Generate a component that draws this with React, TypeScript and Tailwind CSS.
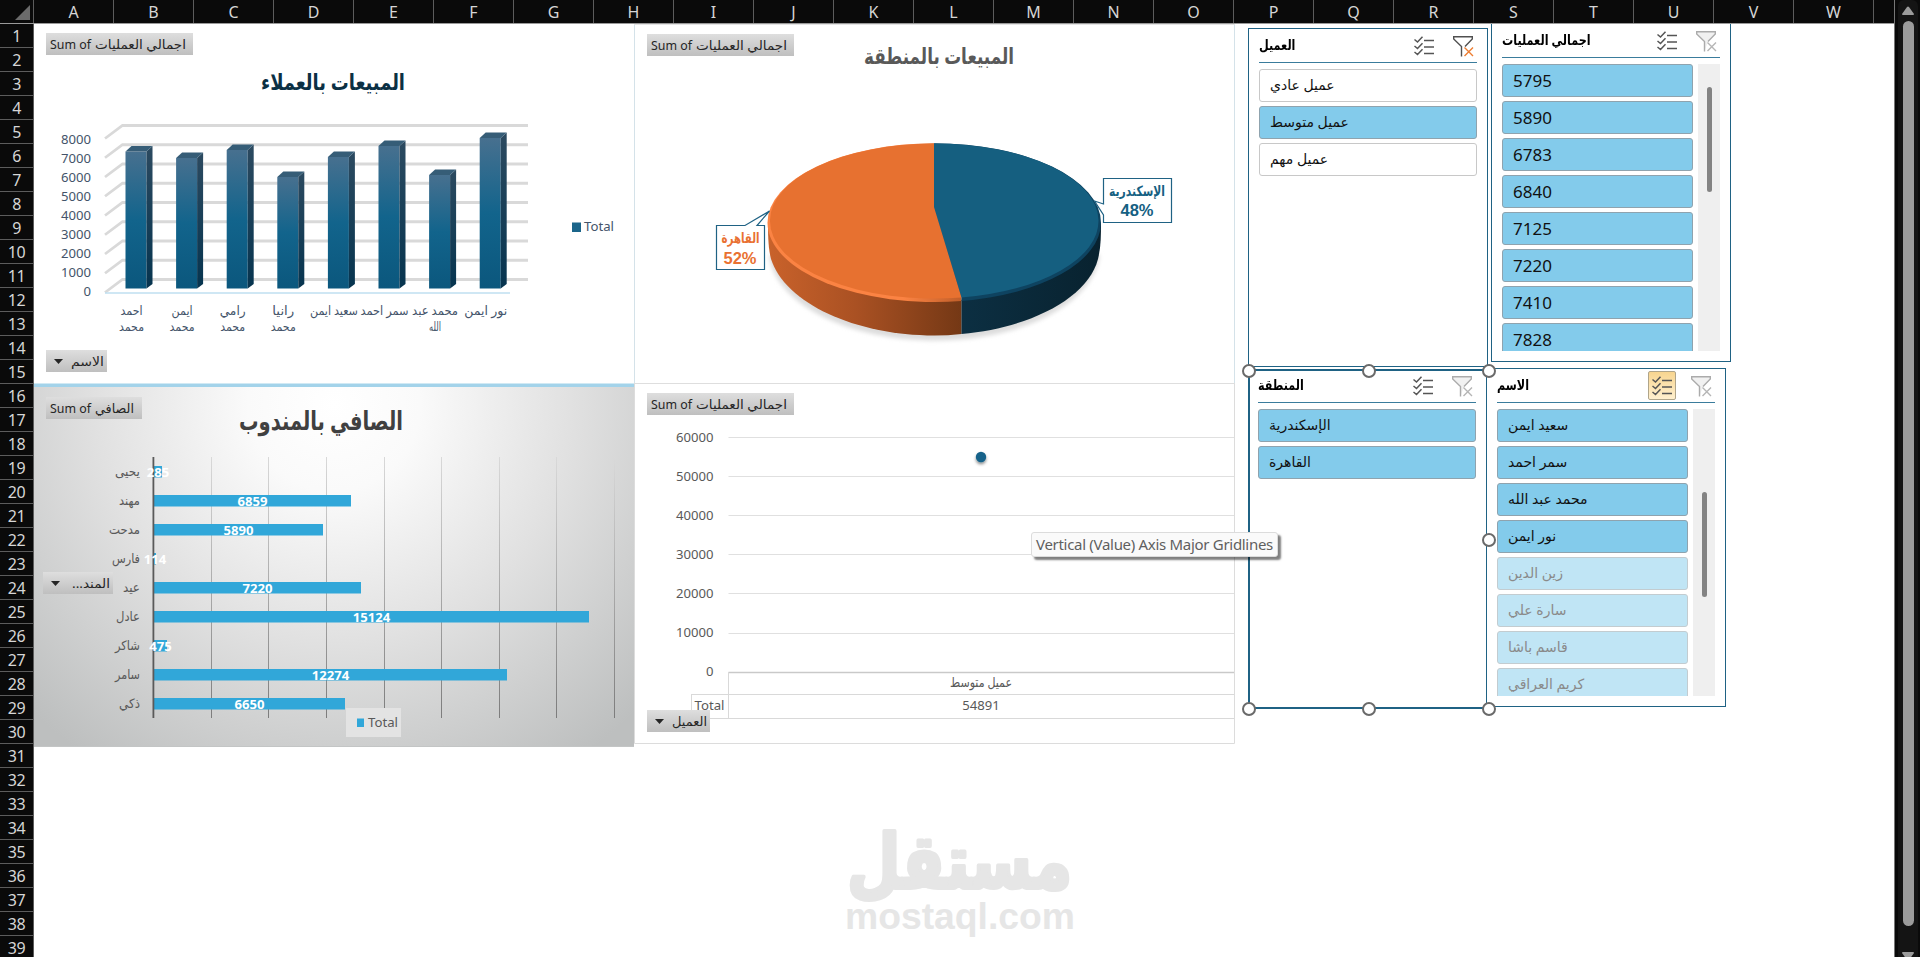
import type { ReactNode } from 'react';

type LabelProps = {
    x: number;
    y: number;
    children: string;
    size?: number;
    width?: number;
    anchor?: 'start' | 'middle' | 'end';
    fill?: string;
    bold?: boolean;
    font?: string;
};

type SlicerItem = {
    label: string;
    state: 'on' | 'off' | 'empty';
};

const columns = 'ABCDEFGHIJKLMNOPQRSTUVW'.split('');
const rows = Array.from({ length: 39 }, (_, i) => i + 1);

const customers = [
    { lines: ['احمد', 'محمد'], top: 151.5, width: 22 },
    { lines: ['ايمن', 'محمد'], top: 158, width: 21 },
    { lines: ['رامي', 'محمد'], top: 150, width: 26 },
    { lines: ['رانيا', 'محمد'], top: 177, width: 22 },
    { lines: ['سعيد ايمن'], top: 157, width: 48 },
    { lines: ['سمر احمد'], top: 146, width: 48 },
    { lines: ['محمد عبد', 'الله'], top: 175, width: 46 },
    { lines: ['نور ايمن'], top: 138, width: 43 },
];

const agents = [
    { name: 'يحيى', value: 285, end: 162, width: 25 },
    { name: 'مهند', value: 6859, end: 351, width: 21 },
    { name: 'مدحت', value: 5890, end: 323, width: 31 },
    { name: 'فارس', value: 114, end: 156, width: 28 },
    { name: 'عيد', value: 7220, end: 361, width: 17 },
    { name: 'عادل', value: 15124, end: 589, width: 24 },
    { name: 'شاكر', value: 475, end: 167, width: 25 },
    { name: 'سامر', value: 12274, end: 507, width: 25 },
    { name: 'ذكي', value: 6650, end: 345, width: 21 },
];

const customerTypes: SlicerItem[] = [
    { label: 'عميل عادي', state: 'empty' },
    { label: 'عميل متوسط', state: 'on' },
    { label: 'عميل مهم', state: 'empty' },
];

const regions: SlicerItem[] = [
    { label: 'الإسكندرية', state: 'on' },
    { label: 'القاهرة', state: 'on' },
];

const totals: SlicerItem[] = ['5795', '5890', '6783', '6840', '7125', '7220', '7410', '7828'].map((label) => ({ label, state: 'on' }));

const names: SlicerItem[] = [
    { label: 'سعيد ايمن', state: 'on' },
    { label: 'سمر احمد', state: 'on' },
    { label: 'محمد عبد الله', state: 'on' },
    { label: 'نور ايمن', state: 'on' },
    { label: 'زين الدين', state: 'off' },
    { label: 'سارة علي', state: 'off' },
    { label: 'قاسم باشا', state: 'off' },
    { label: 'كريم العراقي', state: 'off' },
];

const itemStyles = {
    on: 'border-[#8fa3ae] bg-[#83cbeb] text-[#111]',
    off: 'border-[#c3ccd0] bg-[#c0e5f5] text-[#8a8a8a]',
    empty: 'border-[#c8c8c8] bg-white text-[#111]',
};

function Label({ x, y, children, size = 13, width, anchor = 'middle', fill = '#44546a', bold, font }: LabelProps) {
    return (
        <text
            x={x}
            y={y}
            fontSize={size}
            fill={fill}
            fontWeight={bold ? 700 : 400}
            fontFamily={font}
            textAnchor={anchor}
            textLength={width}
            lengthAdjust="spacingAndGlyphs"
        >
            {children}
        </text>
    );
}

function FieldButton({ x, y, width, text, textWidth, prefix }: { x: number; y: number; width: number; text: string; textWidth: number; prefix?: boolean }) {
    return (
        <g>
            <rect x={x} y={y} width={width} height={22} fill="url(#button)" />
            {prefix ? (
                <Label x={x + 4} y={y + 15.5} size={12} width={41} anchor="start" fill="#262626">
                    Sum of
                </Label>
            ) : (
                <path d={`M${x + 8} ${y + 9}h9l-4.5 5z`} fill="#262626" />
            )}
            <Label x={prefix ? x + 49 : x + width - 3 - textWidth} y={y + 15.5} size={12.5} width={textWidth} anchor="start" fill="#262626">
                {text}
            </Label>
        </g>
    );
}

function ColumnChart() {
    return (
        <svg viewBox="34 24 600 363" className="block h-[363px] w-[600px] bg-white">
            <defs>
                <linearGradient id="button" x1="0" y1="0" x2="0" y2="1">
                    <stop offset="0" stopColor="#dedede" />
                    <stop offset="1" stopColor="#bfbfbf" />
                </linearGradient>
                <linearGradient id="column" x1="0" y1="0" x2="0" y2="1">
                    <stop offset="0" stopColor="#47708f" />
                    <stop offset="0.5" stopColor="#12648c" />
                    <stop offset="1" stopColor="#0b577d" />
                </linearGradient>
                <linearGradient id="columnSide" x1="0" y1="0" x2="0" y2="1">
                    <stop offset="0" stopColor="#2c4a60" />
                    <stop offset="1" stopColor="#06344f" />
                </linearGradient>
            </defs>
            <FieldButton x={46} y={33} width={147} text="اجمالي العمليات" textWidth={91} prefix />
            <Label x={333} y={90} size={22} width={144} fill="#0b3044" bold>
                المبيعات بالعملاء
            </Label>
            {Array.from({ length: 9 }, (_, i) => (
                <g key={i}>
                    <path d={`M105 ${138.5 + i * 19.25}L122.5 ${125.5 + i * 19.25}H528`} fill="none" stroke="#d9d9d9" strokeWidth={2.8} />
                    <Label x={91} y={143.5 + i * 19.1} anchor="end" width={i === 8 ? 7.5 : 30}>
                        {String(8000 - i * 1000)}
                    </Label>
                </g>
            ))}
            <path d="M105 293H510" stroke="#bfdff0" strokeWidth={1.5} />
            {customers.map((customer, i) => {
                const x = 125.5 + i * 50.6;
                return (
                    <g key={i}>
                        <rect x={x} y={customer.top} width={21} height={288.5 - customer.top} fill="url(#column)" />
                        <path d={`M${x + 21} ${customer.top}l6-5.5V284l-6 4.5z`} fill="url(#columnSide)" />
                        <path d={`M${x} ${customer.top}l6-5.5h21l-6 5.5z`} fill="#365d77" />
                        <Label x={x + 6} y={314.5} size={12.5} width={customer.width}>
                            {customer.lines[0]}
                        </Label>
                        {customer.lines[1] && (
                            <Label x={x + 6} y={331} size={12.5} width={customer.lines[1] === 'الله' ? 12 : 25}>
                                {customer.lines[1]}
                            </Label>
                        )}
                    </g>
                );
            })}
            <rect x={572} y={222.5} width={9} height={9.5} fill="#1b658a" />
            <Label x={584} y={231} anchor="start" width={30}>
                Total
            </Label>
            <FieldButton x={46} y={350} width={61} text="الاسم" textWidth={33} />
            <rect x={34} y={383.5} width={600} height={3.5} fill="#a3d3ea" />
        </svg>
    );
}

function BarChart() {
    return (
        <svg viewBox="34 387 600 360" className="block h-[360px] w-[600px]">
            <defs>
                <radialGradient id="paper" gradientUnits="userSpaceOnUse" cx="334" cy="405" r="430">
                    <stop offset="0" stopColor="#ffffff" />
                    <stop offset="0.2" stopColor="#fafafa" />
                    <stop offset="0.55" stopColor="#e1e1e1" />
                    <stop offset="1" stopColor="#bdbfbf" />
                </radialGradient>
                <linearGradient id="gridline" gradientUnits="userSpaceOnUse" x1="0" y1="457" x2="0" y2="718">
                    <stop offset="0" stopColor="#d9d9d9" />
                    <stop offset="1" stopColor="#7c7c7c" />
                </linearGradient>
            </defs>
            <rect x={34} y={387} width={600} height={360} fill="url(#paper)" />
            <path d="M34 746.5H634" stroke="#c3c5c5" />
            <FieldButton x={46} y={397} width={96} text="الصافي" textWidth={39} prefix />
            <Label x={321} y={430} size={26} width={164} fill="#404040" bold>
                الصافي بالمندوب
            </Label>
            {[211, 268, 326, 384, 441, 499, 556, 614].map((x) => (
                <rect key={x} x={x} y={457} width={1} height={261} fill="url(#gridline)" />
            ))}
            {agents.map((agent, i) => (
                <g key={agent.name}>
                    <Label x={140} y={476 + i * 29} size={13} width={agent.width} anchor="end" fill="#595959">
                        {agent.name}
                    </Label>
                    <rect x={154} y={466 + i * 29} width={agent.end - 154} height={11.5} fill="#31a7d9" />
                </g>
            ))}
            <rect x={152.5} y={457} width={1.8} height={261} fill="#5a5a5a" />
            {agents.map((agent, i) => (
                <Label
                    key={agent.name}
                    x={(154 + agent.end) / 2}
                    y={476.5 + i * 29}
                    size={13}
                    width={String(agent.value).length * 7.5}
                    fill="#ffffff"
                    bold
                >
                    {String(agent.value)}
                </Label>
            ))}
            {/* trailing right-to-left mark keeps the dots on the left */}
            <FieldButton x={43} y={572} width={70} text={'المند...\u200F'} textWidth={38} />
            <rect x={346} y={708} width={55} height={29} fill="#e3e3e3" />
            <rect x={357} y={718.5} width={7} height={8.5} fill="#31a7d9" />
            <Label x={368} y={726.5} anchor="start" width={30} fill="#595959">
                Total
            </Label>
        </svg>
    );
}

function PieChart() {
    return (
        <svg viewBox="634 24 601 360" className="block h-[360px] w-[601px] bg-white">
            <defs>
                <linearGradient id="orangeSide" gradientUnits="userSpaceOnUse" x1="768" y1="0" x2="962" y2="0">
                    <stop offset="0" stopColor="#c9622b" />
                    <stop offset="0.45" stopColor="#aa5123" />
                    <stop offset="1" stopColor="#743815" />
                </linearGradient>
                <linearGradient id="orangeRim" gradientUnits="userSpaceOnUse" x1="768" y1="0" x2="962" y2="0">
                    <stop offset="0" stopColor="#fb8343" />
                    <stop offset="0.7" stopColor="#fb8343" />
                    <stop offset="1" stopColor="#c05e29" />
                </linearGradient>
                <linearGradient id="blueSide" gradientUnits="userSpaceOnUse" x1="962" y1="0" x2="1101" y2="0">
                    <stop offset="0" stopColor="#0c2f42" />
                    <stop offset="1" stopColor="#08222f" />
                </linearGradient>
                <filter id="soft" x="-10%" y="-10%" width="120%" height="120%">
                    <feGaussianBlur stdDeviation="2" />
                </filter>
            </defs>
            <path d="M634.5 24V384M1234.5 24V384" stroke="#d4e2e9" />
            <path d="M634 24.5H1235" stroke="#e4e4e4" />
            <path d="M634 383.5H1235" stroke="#dedede" />
            <FieldButton x={647} y={34} width={147} text="اجمالي العمليات" textWidth={91} prefix />
            <Label x={939} y={63.5} size={22} width={150} fill="#595959" bold>
                المبيعات بالمنطقة
            </Label>
            <path d="M769 255C775 305 850 340.500 935 340.500S1093 305 1100 255z" fill="#dcdcdc" filter="url(#soft)" />
            <path d="M768 222.500C768 232 768 248 771 259C785 303 855 335.500 934.500 335.500Q948 335.500 961.500 334V300z" fill="url(#orangeSide)" />
            <path d="M961.500 300V334C1030 328 1088 298 1098 259C1101 247 1101 235 1101 222.500z" fill="url(#blueSide)" />
            <path d="M934 143.300A167 79.500 0 0 0 767.500 222.800A167 79.500 0 0 0 961.500 301V290z" fill="url(#orangeRim)" />
            <path d="M934 143.300A167 79.500 0 0 1 1101 222.800A167 79.500 0 0 1 961.500 301V290z" fill="#0e4360" />
            <path d="M934 207V143.500A164.500 77 0 0 0 770 220A164.500 77.500 0 0 0 961.500 297.500z" fill="#e77130" />
            <path d="M934 207V143.500A164 77 0 0 1 1098.500 220A164.500 77.500 0 0 1 961.500 297.500z" fill="#155f80" />
            <g fill="#fff" stroke="#1f6284" strokeWidth={1.2}>
                <path d="M716.500 225.500H745L769.500 211L757 225.500H764.500V269.500H716.500z" />
                <path d="M1103.500 178.500H1171.500V222.500H1103.500V215L1094.500 201L1103.500 204z" />
            </g>
            <Label x={740.5} y={243} size={14} width={38} fill="#e97132" bold>
                القاهرة
            </Label>
            <Label x={740} y={263.5} size={16} width={33} fill="#e97132" font="Liberation Sans" bold>
                52%
            </Label>
            <Label x={1137} y={196} size={14} width={56} fill="#156082" bold>
                الإسكندرية
            </Label>
            <Label x={1137} y={215.5} size={16} width={33} fill="#156082" font="Liberation Sans" bold>
                48%
            </Label>
        </svg>
    );
}

function ScatterChart() {
    return (
        <svg viewBox="634 384 601 360" className="block h-[360px] w-[601px] bg-white">
            <defs>
                <filter id="dotShadow" x="-50%" y="-50%" width="200%" height="200%">
                    <feDropShadow dx="0" dy="2" stdDeviation="1.5" floodOpacity="0.45" />
                </filter>
            </defs>
            <path d="M634.500 384V743.500H1234.500V384" fill="none" stroke="#dcdcdc" />
            <FieldButton x={647} y={393} width={147} text="اجمالي العمليات" textWidth={91} prefix />
            {Array.from({ length: 7 }, (_, i) => (
                <g key={i}>
                    <path d={`M728.500 ${437.5 + Math.round(i * 39.1)}H1234`} stroke={i === 6 ? '#c9c9c9' : '#e0e0e0'} strokeWidth={i === 6 ? 1.6 : 1.2} />
                    <Label x={713.5} y={441.5 + i * 39.1} anchor="end" width={i === 6 ? 7.5 : 37.5} fill="#595959">
                        {String(60000 - i * 10000)}
                    </Label>
                </g>
            ))}
            <path d="M728.500 672V718.500M691.500 694.500H1234M691.500 694V718.500H1234" fill="none" stroke="#d9d9d9" />
            <circle cx={981} cy={457} r={5.2} fill="#17628a" filter="url(#dotShadow)" />
            <Label x={981} y={686.5} size={13.5} width={62} fill="#595959">
                عميل متوسط
            </Label>
            <Label x={981} y={709.5} width={37.5} fill="#595959">
                54891
            </Label>
            <Label x={694.5} y={709.5} anchor="start" width={30} fill="#595959">
                Total
            </Label>
            <FieldButton x={647} y={710} width={63} text="العميل" textWidth={35} />
        </svg>
    );
}

function MultiSelectIcon() {
    return (
        <svg viewBox="0 0 20 20" className="size-5" fill="none" stroke="#555" strokeWidth={1.5}>
            <path d="M0.500 3.500L3.500 6L8.500 0.800M0.500 10L3.500 12.500L8.500 7.300M0.500 16L3.500 18.500L8.500 13.300M10 4.500H20M10 11H20M10 17.500H20" />
        </svg>
    );
}

function ClearFilterIcon({ active }: { active?: boolean }) {
    return (
        <svg viewBox="0 0 20 20" className="size-5 overflow-visible" fill="none" stroke={active ? '#505050' : '#ababab'} strokeWidth={1.4}>
            <path d="M12 10.500L19.300 3V0.800H0.700V3L8.500 10.500V20.500" fill={active ? 'none' : '#f1f1f1'} />
            <path d="M11.500 11.500L20 20M20 11.500L11.500 20" stroke={active ? '#ed7d31' : '#b5b5b5'} />
        </svg>
    );
}

type SlicerProps = {
    title: string;
    items: SlicerItem[];
    className: string;
    filtered?: boolean;
    multi?: boolean;
    scroll?: string;
    children?: ReactNode;
};

function Slicer({ title, items, className, filtered, multi, scroll, children }: SlicerProps) {
    return (
        <section className={`relative flex w-[240px] shrink-0 flex-col border-[#1f6284] bg-white ${className}`}>
            <header className="flex h-[28px] shrink-0 items-center border-b-[1.5px] border-[#3a7c9c]">
                <h2 className="mb-2 flex-1 origin-left scale-x-80 text-[14px] leading-none font-bold tracking-[-0.4px] text-black">{title}</h2>
                <div
                    className={`mr-[15px] mb-[6px] flex h-[29px] w-[28px] shrink-0 items-center justify-center ${
                        multi ? 'rounded-[2px] border border-[#b0a58a] bg-linear-to-b from-[#f8d58f] to-[#fff0cf]' : ''
                    }`}
                >
                    <MultiSelectIcon />
                </div>
                <div className="mr-1 mb-[6px] flex w-[20px] shrink-0">
                    <ClearFilterIcon active={filtered} />
                </div>
            </header>
            <div className="mt-[6px] flex min-h-0 flex-1 gap-[5px]">
                <ul className="flex min-w-0 flex-1 flex-col gap-1 overflow-hidden">
                    {items.map((item) => (
                        <li
                            key={item.label}
                            className={`flex h-[33px] shrink-0 items-center rounded-[3px] border pl-[10px] leading-none ${
                                scroll && item.label.length === 4 ? 'text-[17px]' : 'pb-[2px] text-[14px] tracking-[-0.3px]'
                            } ${itemStyles[item.state]}`}
                        >
                            {item.label}
                        </li>
                    ))}
                </ul>
                {scroll && (
                    <div className="flex w-[22px] justify-center bg-[#efefef]">
                        <div className={`h-[105px] w-[5px] rounded-sm bg-[#838383] ${scroll}`} />
                    </div>
                )}
            </div>
            {children}
        </section>
    );
}

function SelectionHandles() {
    const places = [
        'left-[-8px] top-[-7px]',
        'left-[112px] top-[-7px]',
        'left-[232px] top-[-7px]',
        'left-[232px] top-[162px]',
        'left-[-8px] top-[331px]',
        'left-[112px] top-[331px]',
        'left-[232px] top-[331px]',
    ];
    return places.map((place) => <span key={place} className={`absolute z-10 size-[14px] rounded-full border-[2.5px] border-[#6a6a6a] bg-white ${place}`} />);
}

function Watermark() {
    return (
        <svg viewBox="835 785 250 165" className="absolute top-[761px] left-[801px] h-[165px] w-[250px] overflow-visible" fill="#e6e6e6">
            <text
                x={847}
                y={888}
                fontSize={75}
                fontWeight={700}
                textLength={225}
                lengthAdjust="spacingAndGlyphs"
                stroke="#e6e6e6"
                strokeWidth={4}
                strokeLinejoin="round"
            >
                مستقل
            </text>
            <text x={845} y={929} fontSize={36} fontWeight={700} textLength={230} lengthAdjust="spacingAndGlyphs" fontFamily="Liberation Sans">
                mostaql.com
            </text>
        </svg>
    );
}

export default function App() {
    return (
        <div className="flex h-[957px] w-[1920px] overflow-hidden bg-[#0a0a0a] font-['Noto_Sans','DejaVu_Sans',sans-serif]">
            <div className="flex w-[1895px] flex-col border-r border-[#777]">
                <div className="flex h-[24px] shrink-0 border-b border-[#9a9a9a] text-[#d6d6d6]">
                    <div className="flex w-[34px] items-end justify-end border-r border-[#5c5c5c] p-[3px]">
                        <svg viewBox="0 0 15 15" className="size-[15px]">
                            <path d="M15 0V15H0z" fill="#6b6b6b" />
                        </svg>
                    </div>
                    {columns.map((column) => (
                        <div key={column} className="flex w-[80px] items-center justify-center border-r border-[#5c5c5c] text-[16px] leading-none">
                            {column}
                        </div>
                    ))}
                </div>
                <div className="flex min-h-0 flex-1">
                    <div className="flex w-[34px] shrink-0 flex-col border-r border-[#5c5c5c] text-[#d6d6d6]">
                        {rows.map((row) => (
                            <div key={row} className="flex h-[24px] shrink-0 items-center justify-center border-b border-[#5c5c5c] text-[16px] leading-none tracking-[-0.5px]">
                                {row}
                            </div>
                        ))}
                    </div>
                    <main className="relative flex flex-1 items-start bg-white">
                        <div className="flex w-[600px] flex-col">
                            <ColumnChart />
                            <BarChart />
                        </div>
                        <div className="flex w-[601px] flex-col">
                            <PieChart />
                            <ScatterChart />
                        </div>
                        <div className="ml-[13px] flex flex-col pt-1">
                            <Slicer title="العميل" items={customerTypes} className="h-[339px] border px-[10px] pt-[6px]" filtered />
                            <Slicer title="المنطقة" items={regions} className="mt-[2px] h-[340px] border-2 pt-[4px] pr-[10px] pl-[8px]">
                                <SelectionHandles />
                            </Slicer>
                        </div>
                        <div className="flex flex-col">
                            <Slicer title="اجمالي العمليات" items={totals} className="ml-[3px] h-[338px] border-x border-b px-[10px] pt-[6px] pb-[10px]" scroll="mt-[23px]" />
                            <Slicer title="الاسم" items={names} className="mt-[6px] -ml-[2px] h-[339px] border px-[10px] pt-[6px] pb-[10px]" scroll="mt-[83px]" multi />
                        </div>
                        <div className="absolute top-[508px] left-[997px] flex h-[25px] w-[247px] items-center justify-center rounded-[3px] border border-[#dcdcdc] bg-[#fafafa] text-[15px] tracking-[-0.3px] whitespace-nowrap text-[#5f5f5f] shadow-[3px_3px_2px_rgba(0,0,0,0.5)]">
                            Vertical (Value) Axis Major Gridlines
                        </div>
                        <Watermark />
                    </main>
                </div>
            </div>
            <div className="ml-[3px] flex w-[20px] flex-col items-center rounded-t-md bg-[#141414] pt-[6px]">
                <svg viewBox="0 0 12 9" className="h-[9px] w-[12px] shrink-0">
                    <path d="M5 1Q6 0 7 1L12 8Q12 9 11 9H1Q0 9 0 8z" fill="#9b9b9b" />
                </svg>
                <div className="mt-[6px] h-[905px] w-[11px] shrink-0 rounded-full bg-[#9b9b9b]" />
                <svg viewBox="0 0 12 9" className="mt-[26px] h-[9px] w-[12px] shrink-0">
                    <path d="M5 8Q6 9 7 8L12 1Q12 0 11 0H1Q0 0 0 1z" fill="#9b9b9b" />
                </svg>
            </div>
        </div>
    );
}
